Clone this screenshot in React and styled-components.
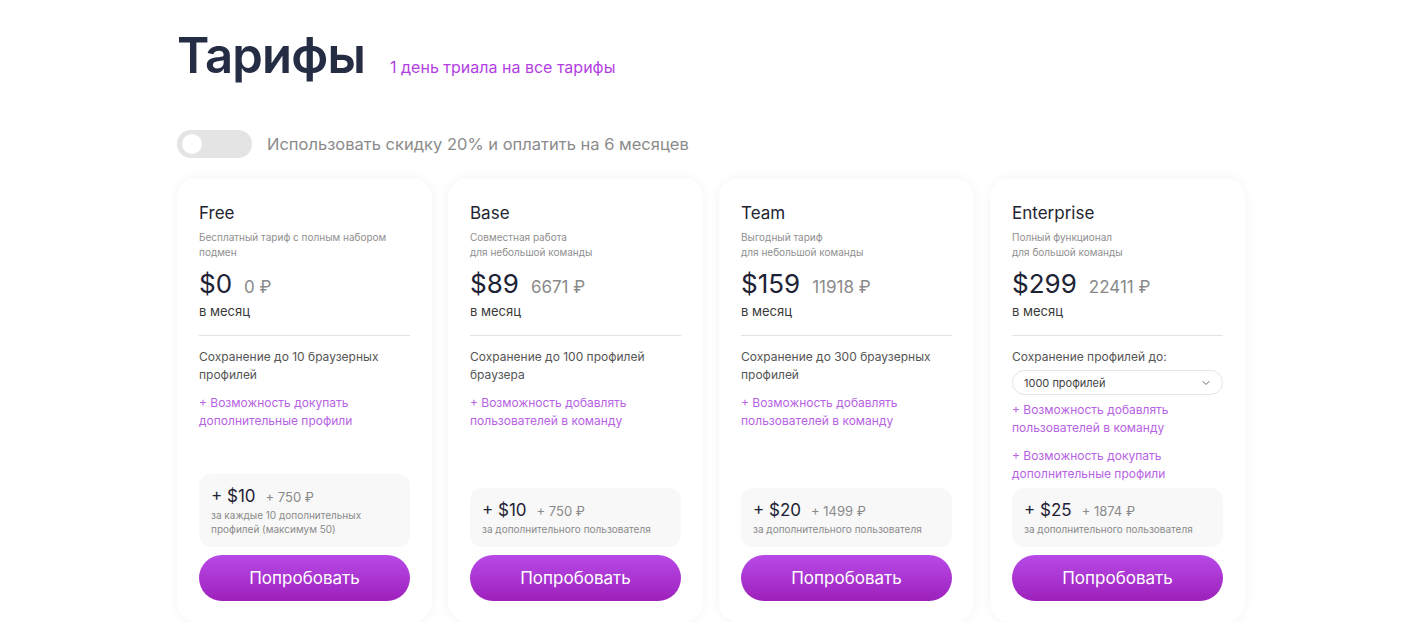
import React from "react";
import styled, { createGlobalStyle } from "styled-components";

const Global = createGlobalStyle`
  * { box-sizing: border-box; }
  body { margin: 0; background: #ffffff; font-family: Inter, "Noto Sans", sans-serif; color: #252d45; }
`;

const Page = styled.div`
  padding: 26px 0 0 177px;
`;

const Header = styled.div`
  display: flex;
  align-items: baseline;
  gap: 25px;
`;

const Title = styled.h1`
  margin: 0;
  font-size: 49px;
  line-height: 60px;
  font-weight: 600;
  color: #252d45;
  letter-spacing: -0.8px;
`;

const Trial = styled.span`
  font-size: 16px;
  color: #b23fe3;
`;

const ToggleRow = styled.div`
  display: flex;
  align-items: center;
  gap: 15px;
  margin-top: 44px;
`;

const Switch = styled.div`
  width: 75px;
  height: 28px;
  border-radius: 14px;
  background: #e4e4e4;
  padding: 4px 5px;
  display: flex;
  align-items: center;
`;

const Knob = styled.div`
  width: 20px;
  height: 20px;
  border-radius: 50%;
  background: #ffffff;
`;

const ToggleLabel = styled.span`
  font-size: 16.5px;
  color: #8b8b8b;
`;

const Cards = styled.div`
  display: flex;
  gap: 16px;
  margin-top: 20px;
`;

const Card = styled.div`
  width: 255px;
  height: 444px;
  background: #fff;
  border-radius: 20px;
  box-shadow: 0 0 12px rgba(0, 0, 0, 0.05);
  padding: 24px 22px 21px;
  display: flex;
  flex-direction: column;
`;

const Name = styled.div`
  font-size: 17px;
  line-height: 22px;
  color: #222431;
`;

const Desc = styled.div`
  margin-top: 6px;
  font-size: 10px;
  line-height: 15px;
  color: #8f8f8f;
  min-height: 30px;
`;

const PriceRow = styled.div`
  display: flex;
  align-items: baseline;
  gap: 12px;
  margin-top: 8px;
`;

const Price = styled.span`
  font-size: 26px;
  line-height: 32px;
  color: #1e2235;
`;

const Rub = styled.span`
  font-size: 17px;
  color: #8a8a8a;
`;

const Period = styled.div`
  font-size: 13px;
  line-height: 18px;
  margin-top: 2px;
  color: #3a3a3a;
`;

const Divider = styled.div`
  height: 1px;
  background: #e3e3e3;
  margin: 15px 0 12px;
`;

const Feature = styled.div`
  font-size: 12px;
  line-height: 18px;
  color: #555;
`;

const Extra = styled.div`
  font-size: 12px;
  line-height: 18px;
  color: #b763e4;
  margin-top: ${(p) => p.$mt || 9}px;
`;

const Select = styled.div`
  margin-top: 4px;
  height: 25px;
  border: 1px solid #e4e4e4;
  border-radius: 13px;
  display: flex;
  align-items: center;
  justify-content: space-between;
  padding: 0 10px 0 11px;
  font-size: 11px;
  color: #444;
`;

const Bottom = styled.div`
  margin-top: auto;
  display: flex;
  flex-direction: column;
  gap: 8px;
`;

const AddBox = styled.div`
  background: #f8f8f8;
  border-radius: 12px;
  padding: 11px 12px 11px;
`;

const AddPriceRow = styled.div`
  display: flex;
  align-items: baseline;
  gap: 10px;
`;

const AddPrice = styled.span`
  font-size: 17px;
  line-height: 22px;
  color: #1e2235;
`;

const AddRub = styled.span`
  font-size: 13px;
  color: #8a8a8a;
`;

const AddDesc = styled.div`
  margin-top: 1px;
  font-size: 10px;
  line-height: 14px;
  color: #8a8a8a;
`;

const Button = styled.button`
  height: 46px;
  border: none;
  border-radius: 23px;
  background: linear-gradient(180deg, #b84ae8 0%, #9d20bb 100%);
  color: #fff;
  font-family: inherit;
  font-size: 17px;
  cursor: pointer;
`;

const Chevron = () => (
  <svg width="12" height="12" viewBox="0 0 24 24" fill="none" stroke="#666" strokeWidth="2" strokeLinecap="round" strokeLinejoin="round">
    <path d="M6 9l6 6 6-6" />
  </svg>
);

const plans = [
  {
    name: "Free",
    desc: ["Бесплатный тариф с полным набором подмен"],
    price: "$0",
    rub: "0 ₽",
    feature: ["Сохранение до 10 браузерных", "профилей"],
    extras: [["+ Возможность докупать", "дополнительные профили"]],
    add: "+ $10",
    addRub: "+ 750 ₽",
    addDesc: ["за каждые 10 дополнительных", "профилей (максимум 50)"],
  },
  {
    name: "Base",
    desc: ["Совместная работа", "для небольшой команды"],
    price: "$89",
    rub: "6671 ₽",
    feature: ["Сохранение до 100 профилей", "браузера"],
    extras: [["+ Возможность добавлять", "пользователей в команду"]],
    add: "+ $10",
    addRub: "+ 750 ₽",
    addDesc: ["за дополнительного пользователя"],
  },
  {
    name: "Team",
    desc: ["Выгодный тариф", "для небольшой команды"],
    price: "$159",
    rub: "11918 ₽",
    feature: ["Сохранение до 300 браузерных", "профилей"],
    extras: [["+ Возможность добавлять", "пользователей в команду"]],
    add: "+ $20",
    addRub: "+ 1499 ₽",
    addDesc: ["за дополнительного пользователя"],
  },
  {
    name: "Enterprise",
    desc: ["Полный функционал", "для большой команды"],
    price: "$299",
    rub: "22411 ₽",
    feature: ["Сохранение профилей до:"],
    select: "1000 профилей",
    extras: [
      ["+ Возможность добавлять", "пользователей в команду"],
      ["+ Возможность докупать", "дополнительные профили"],
    ],
    add: "+ $25",
    addRub: "+ 1874 ₽",
    addDesc: ["за дополнительного пользователя"],
  },
];

const Lines = ({ lines }) =>
  lines.map((l, i) => (
    <React.Fragment key={i}>
      {i > 0 && <br />}
      {l}
    </React.Fragment>
  ));

export default function App() {
  return (
    <>
      <Global />
      <Page>
        <Header>
          <Title>Тарифы</Title>
          <Trial>1 день триала на все тарифы</Trial>
        </Header>
        <ToggleRow>
          <Switch>
            <Knob />
          </Switch>
          <ToggleLabel>Использовать скидку 20% и оплатить на 6 месяцев</ToggleLabel>
        </ToggleRow>
        <Cards>
          {plans.map((p) => (
            <Card key={p.name}>
              <Name>{p.name}</Name>
              <Desc>
                <Lines lines={p.desc} />
              </Desc>
              <PriceRow>
                <Price>{p.price}</Price>
                <Rub>{p.rub}</Rub>
              </PriceRow>
              <Period>в месяц</Period>
              <Divider />
              <Feature>
                <Lines lines={p.feature} />
              </Feature>
              {p.select && (
                <Select>
                  <span>{p.select}</span>
                  <Chevron />
                </Select>
              )}
              {p.extras.map((e, i) => (
                <Extra key={i} $mt={p.select && i === 0 ? 6 : 10}>
                  <Lines lines={e} />
                </Extra>
              ))}
              <Bottom>
                <AddBox>
                  <AddPriceRow>
                    <AddPrice>{p.add}</AddPrice>
                    <AddRub>{p.addRub}</AddRub>
                  </AddPriceRow>
                  <AddDesc>
                    <Lines lines={p.addDesc} />
                  </AddDesc>
                </AddBox>
                <Button>Попробовать</Button>
              </Bottom>
            </Card>
          ))}
        </Cards>
      </Page>
    </>
  );
}
